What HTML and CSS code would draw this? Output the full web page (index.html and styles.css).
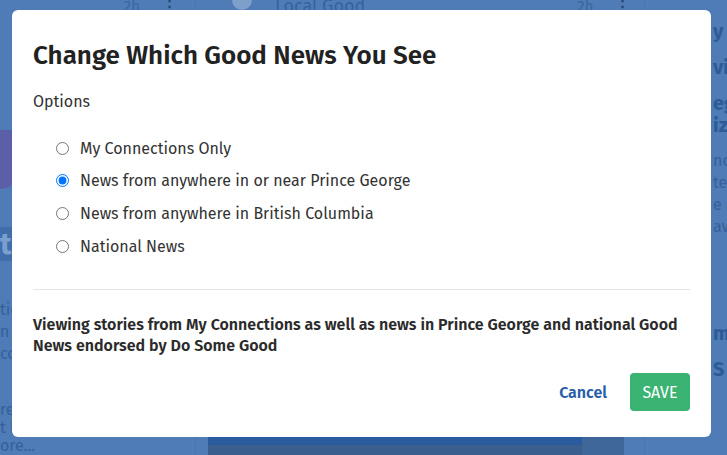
FILE: index.html
```html
<!DOCTYPE html>
<html lang="en">
<head>
    <meta charset="UTF-8">
    <meta name="viewport" content="width=device-width, initial-scale=1.0">
    <title>Do Some Good - Good News</title>

    <link rel="stylesheet" href="styles.css">
</head>
<body>

    <div id="pagina">
        <div class="coluna coluna-esq">
            <div class="topo-post">
                <span>2h</span>
                <span class="pontos">&#8942;</span>
            </div>
            <div class="foto-roxa"></div>
            <div class="faixa-azul">t</div>
            <p class="txt-fundo">tion<br>n<br>co</p>
            <p class="txt-fundo txt-baixo">re<br>t has made<br>ore...</p>
        </div>
        <div class="coluna coluna-meio">
            <div class="topo-post">
                <span class="globo"></span>
                <span class="local">Local Good</span>
                <span class="hora">2h</span>
                <span class="pontos">&#8942;</span>
            </div>
            <div class="espaco"></div>
            <div class="rodape-meio">
                <div class="foto-escura"></div>
                <div class="foto-lado"></div>
            </div>
        </div>
        <div class="coluna coluna-dir">
            <p class="txt-fundo forte">y t</p>
            <p class="txt-fundo forte">vit</p>
            <p class="txt-fundo forte">egi<br>iza</p>
            <p class="txt-fundo">no<br>tea<br>e a<br>av</p>
            <p class="txt-fundo forte mi">mi</p>
            <p class="txt-fundo forte">S</p>
        </div>
    </div>

    <div id="modal">
        <h1>Change Which Good News You See</h1>

        <p class="rotulo">Options</p>

        <form id="opcoes" action="#">
            <label class="opcao"><input type="radio" name="filtro" value="conexoes"> My Connections Only</label>
            <label class="opcao"><input type="radio" name="filtro" value="local" checked> News from anywhere in or near Prince George</label>
            <label class="opcao"><input type="radio" name="filtro" value="provincia"> News from anywhere in British Columbia</label>
            <label class="opcao"><input type="radio" name="filtro" value="nacional"> National News</label>
        </form>

        <hr>

        <p id="resumo">Viewing stories from My Connections as well as news in Prince George and national Good News endorsed by Do Some Good</p>

        <div id="botoes">
            <a href="#" class="cancelar">Cancel</a>
            <button type="button" class="salvar">SAVE</button>
        </div>
    </div>

</body>
</html>
```

FILE: styles.css
```css
body{
  margin: 0;
  font-family: 'Fira Sans', 'Roboto', 'Noto Sans', sans-serif;
  background: #4f7bb6;
  height: 455px;
  overflow: hidden;
}

/* pagina de fundo, ja escurecida pelo overlay */
#pagina{
  display: flex;
  height: 455px;
  color: #2f5d9c;
}

.coluna{
  display: flex;
  flex-direction: column;
  flex-shrink: 0;
}

.coluna-esq{
  width: 195px;
  border-right: 1px solid #4a76b0;
}

.topo-post{
  display: flex;
  align-items: center;
  height: 12px;
  font-size: 15px;
  color: #3a679f;
  overflow: hidden;
}

.coluna-esq .topo-post{
  justify-content: flex-end;
  gap: 22px;
  padding-right: 18px;
}

.pontos{
  font-weight: bold;
  color: #23466e;
}

.foto-roxa{
  width: 20px;
  height: 60px;
  margin-top: 118px;
  background: #5b5fa8;
  border-radius: 0 10px 20px 0;
}

.faixa-azul{
  margin-top: 38px;
  height: 34px;
  background: #3f6eab;
  color: #7c9fd0;
  font-size: 30px;
  font-weight: bold;
  line-height: 34px;
}

.txt-fundo{
  margin: 0;
  font-size: 16px;
  line-height: 22px;
  color: #36609c;
}

.coluna-esq .txt-fundo{
  margin-top: 38px;
}

.coluna-esq .txt-baixo{
  margin-top: 36px;
  line-height: 18px;
}

.coluna-meio{
  margin-left: 12px;
  width: 436px;
  border-right: 1px solid #4a76b0;
}

.coluna-meio .topo-post{
  padding-left: 24px;
}

.globo{
  width: 20px;
  height: 20px;
  border-radius: 50%;
  background: #7f9fcb;
  margin-top: -12px;
}

.local{
  margin-left: 23px;
  font-size: 18px;
  line-height: 12px;
  color: #3563a0;
}

.hora{
  margin-left: 212px;
}

.coluna-meio .pontos{
  margin-left: 22px;
}

.espaco{
  flex: 1;
}

.rodape-meio{
  display: flex;
  height: 18px;
}

.foto-escura{
  width: 374px;
  background: linear-gradient(#2a5b9e 0 8px, #3a5f8e 8px);
}

.foto-lado{
  width: 42px;
  background: #3e6699;
}

.coluna-dir{
  margin-left: 14px;
  padding-left: 54px;
  padding-top: 20px;
  gap: 14px;
  flex: 1;
  flex-shrink: 1;
}

.coluna-dir .forte{
  font-weight: bold;
  font-size: 20px;
  color: #2d5b97;
}

.coluna-dir .mi{
  margin-top: 70px;
}

/* janela do modal */
#modal{
  position: absolute;
  left: 12px;
  top: 10px;
  width: 657px;
  height: 375px;
  padding: 30px 21px 22px 21px;
  background: white;
  border-radius: 6px;
  color: #222;
}

h1{
  margin: 0;
  font-size: 26px;
  line-height: 32px;
  font-weight: 600;
  color: #222;
}

.rotulo{
  margin: 20px 0 0 0;
  font-size: 16px;
  line-height: 20px;
  color: #333;
}

#opcoes{
  display: flex;
  flex-direction: column;
  margin-top: 20px;
  padding-left: 18px;
}

.opcao{
  display: flex;
  align-items: center;
  height: 32.6px;
  font-size: 16px;
  color: #333;
}

.opcao input{
  margin: 0 11px 0 5px;
  width: 13px;
  height: 13px;
}

hr{
  margin: 27px 0 0 0;
  border: none;
  border-top: 1px solid #e6e6e6;
}

#resumo{
  margin: 24px 0 0 0;
  font-size: 16px;
  line-height: 21px;
  font-weight: 600;
  color: #2b2b2b;
}

#botoes{
  display: flex;
  justify-content: flex-end;
  align-items: center;
  gap: 23px;
  margin-top: 17px;
}

.cancelar{
  color: #2a5ea8;
  font-weight: 600;
  font-size: 16px;
  text-decoration: none;
}

.salvar{
  width: 60px;
  height: 38px;
  border: none;
  border-radius: 4px;
  background: #3bb372;
  color: white;
  font-family: inherit;
  font-size: 16px;
}
```
